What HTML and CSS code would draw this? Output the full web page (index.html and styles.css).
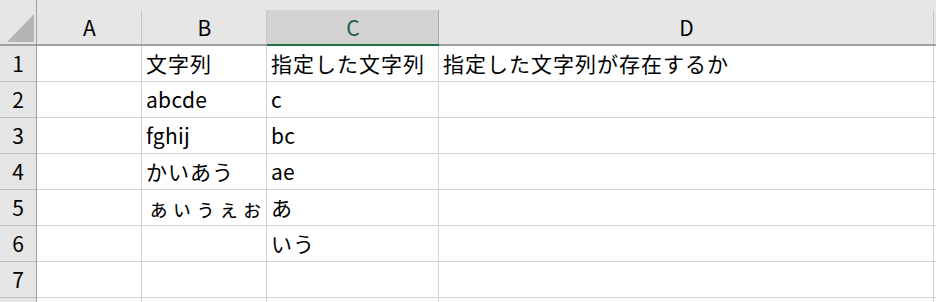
FILE: index.html
```html
<!DOCTYPE html>
<html lang="ja">
<head>
  <meta charset="UTF-8">
  <title>Sheet1</title>
  <link rel="stylesheet" href="styles.css">
</head>
<body>

<div class="sheet">
  <!-- en-tête des colonnes -->
  <div class="corner"><span class="tri"></span></div>
  <div class="colhead">A</div>
  <div class="colhead">B</div>
  <div class="colhead sel">C</div>
  <div class="colhead">D</div>
  <div class="colhead last"></div>

  <div class="rowhead">1</div>
  <div class="cell"></div>
  <div class="cell">文字列</div>
  <div class="cell">指定した文字列</div>
  <div class="cell">指定した文字列が存在するか</div>
  <div class="cell last"></div>

  <div class="rowhead">2</div>
  <div class="cell"></div>
  <div class="cell latin">abcde</div>
  <div class="cell latin">c</div>
  <div class="cell"></div>
  <div class="cell last"></div>

  <div class="rowhead">3</div>
  <div class="cell"></div>
  <div class="cell latin">fghij</div>
  <div class="cell latin">bc</div>
  <div class="cell"></div>
  <div class="cell last"></div>

  <div class="rowhead">4</div>
  <div class="cell"></div>
  <div class="cell">かいあう</div>
  <div class="cell latin">ae</div>
  <div class="cell"></div>
  <div class="cell last"></div>

  <div class="rowhead">5</div>
  <div class="cell"></div>
  <div class="cell small">ぁぃぅぇぉ</div>
  <div class="cell">あ</div>
  <div class="cell"></div>
  <div class="cell last"></div>

  <div class="rowhead">6</div>
  <div class="cell"></div>
  <div class="cell"></div>
  <div class="cell">いう</div>
  <div class="cell"></div>
  <div class="cell last"></div>

  <div class="rowhead">7</div>
  <div class="cell"></div>
  <div class="cell"></div>
  <div class="cell"></div>
  <div class="cell"></div>
  <div class="cell last"></div>

  <!-- ligne 8 : seul le haut est visible -->
  <div class="rowhead"></div>
  <div class="cell"></div>
  <div class="cell"></div>
  <div class="cell"></div>
  <div class="cell"></div>
  <div class="cell last"></div>
</div>

</body>
</html>
```
FILE: styles.css
```css
body {
  margin: 0;
  background: #ffffff;
  font-family: 'Noto Sans CJK JP', 'Noto Sans', sans-serif;
  color: #000;
  overflow: hidden;
}

.sheet {
  display: grid;
  grid-template-columns: 37px 105px 125px 172px 495px 100px;
  grid-template-rows: 46px repeat(8, 36px);
  width: 936px;
  height: 302px;
  overflow: hidden;
}

.corner, .colhead {
  background: #e6e6e6;
  border-bottom: 2px solid #a0a0a0;
  position: relative;
}

.corner {
  border-right: 1px solid #a0a0a0;
}

.tri {
  position: absolute;
  left: 7px;
  top: 14px;
  width: 27px;
  height: 28px;
  background: #b5b5b5;
  clip-path: polygon(100% 0, 100% 100%, 0 100%);
}

.colhead {
  display: flex;
  align-items: center;
  justify-content: center;
  padding-top: 10px;
  font-size: 21px;
  line-height: 1;
}

.colhead::after {
  content: "";
  position: absolute;
  right: 0;
  top: 10px;
  bottom: 0;
  width: 1px;
  background: #c6c6c6;
}

.colhead.sel {
  background: linear-gradient(#e6e6e6 10px, #d2d2d2 10px);
  border-bottom-color: #217346;
  color: #1d5f45;
}

.colhead.sel::after {
  background: #ababab;
}

.colhead.last::after {
  display: none;
}

.rowhead {
  background: #e6e6e6;
  border-right: 1px solid #a0a0a0;
  border-bottom: 1px solid #bdbdbd;
  display: flex;
  align-items: center;
  justify-content: center;
  font-size: 21px;
  line-height: 1;
}

.cell {
  border-right: 1px solid #d4d4d4;
  border-bottom: 1px solid #d4d4d4;
  display: flex;
  align-items: center;
  padding-left: 4px;
  font-size: 21px;
  line-height: 1;
  white-space: nowrap;
  overflow: hidden;
  letter-spacing: 1px;
}

.cell.latin {
  letter-spacing: 0.3px;
}

.cell.small {
  padding-left: 6px;
  letter-spacing: 2.4px;
}
```
